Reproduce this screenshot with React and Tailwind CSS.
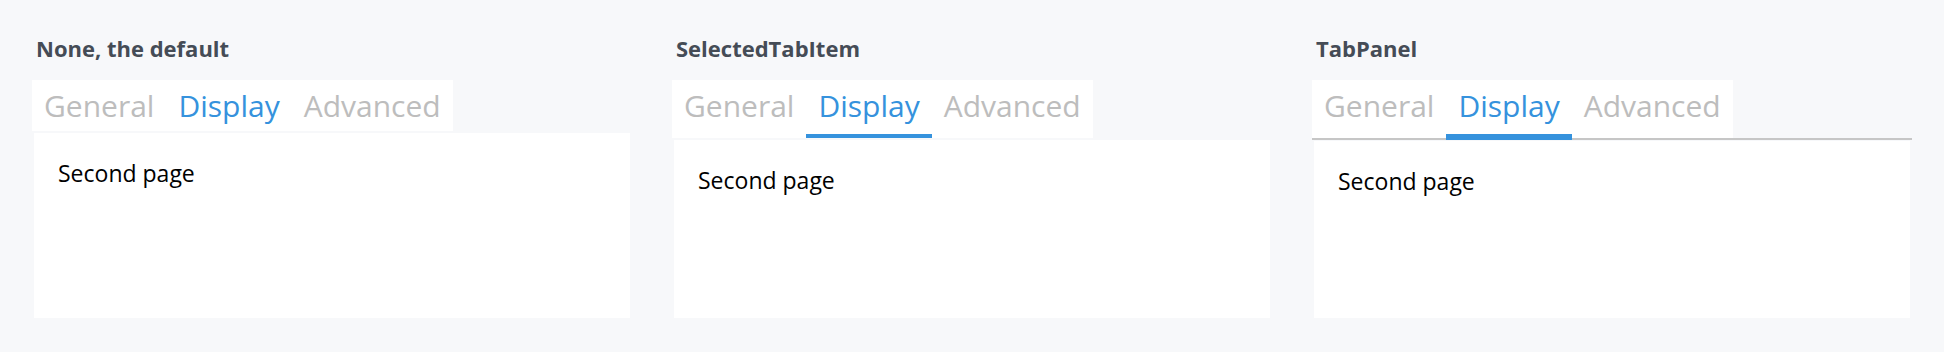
import React from "react";

const TABS = ["General", "Display", "Advanced"];

function TabStrip({ variant }) {
  const underline = variant !== "none";
  return (
    <div className="flex bg-white">
      {TABS.map((t) => {
        const sel = t === "Display";
        return (
          <div key={t} className="relative flex flex-col px-3">
            <div
              className={
                "pt-[6px] text-[30px] leading-[40px] whitespace-nowrap " +
                (sel ? "text-[#3592dd]" : "text-[#bdbdbd]") +
                (underline ? " pb-[12px]" : " pb-[5px]")
              }
            >
              {t}
            </div>
            {underline && sel && (
              <div
                className={
                  "absolute left-0 right-0 bg-[#3592dd] " +
                  (variant === "panel" ? "bottom-[-2px] h-[6px]" : "bottom-0 h-[4px]")
                }
              />
            )}
          </div>
        );
      })}
    </div>
  );
}

function Panel({ title, variant }) {
  return (
    <div className="flex w-[600px] flex-col">
      <div className="pl-[4px] pt-[33px] pb-[17px] text-[22px] font-bold leading-[30px] text-[#454c56]">
        {title}
      </div>
      {variant === "panel" ? (
        <div className="flex border-b-2 border-[#c6c6c6]">
          <TabStrip variant={variant} />
        </div>
      ) : (
        <div className="flex">
          <TabStrip variant={variant} />
        </div>
      )}
      <div
        className={
          "mx-[2px] bg-white px-6 pt-[22px] text-[23px] leading-[36px] text-black " +
          (variant === "panel" ? "mt-px h-[177px]" : variant === "item" ? "mt-[2px] h-[178px]" : "mt-[2px] h-[185px]")
        }
      >
        Second page
      </div>
    </div>
  );
}

export default function App() {
  return (
    <div className="flex h-[352px] w-[1944px] gap-[40px] bg-[#f7f8fa] pl-[32px] font-['Open_Sans',sans-serif]">
      <Panel title="None, the default" variant="none" />
      <Panel title="SelectedTabItem" variant="item" />
      <Panel title="TabPanel" variant="panel" />
    </div>
  );
}
